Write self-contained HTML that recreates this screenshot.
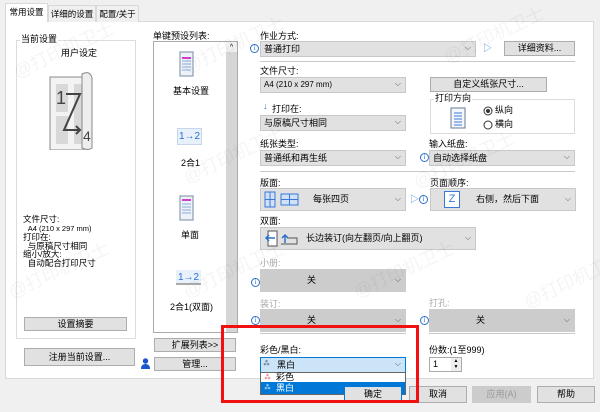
<!DOCTYPE html>
<html><head><meta charset="utf-8">
<style>
*{margin:0;padding:0;box-sizing:border-box}
body{width:600px;height:412px;background:#f0f0f0;font-family:"Liberation Sans","Noto Sans CJK SC",sans-serif;font-size:9px;line-height:11px;color:#000;position:relative;overflow:hidden}
.a{position:absolute;white-space:nowrap}
.tab{position:absolute;top:5px;height:17px;border:1px solid #d9d9d9;border-bottom:none;background:#f0f0f0;padding:3px 0;font-size:8.5px;text-align:center;line-height:11px}
.panel{position:absolute;left:5px;top:21px;width:589px;height:358px;background:#fff;border:1px solid #d9d9d9}
.cb{position:absolute;background:#e1e1e1;border:1px solid #c8c8c8;padding:2px 3px;font-size:9px;line-height:10px}
.cb:after{content:"⌵";position:absolute;right:4px;top:50%;transform:translateY(-60%);font-size:8px;color:#555}
.btn{position:absolute;background:#e1e1e1;border:1px solid #adadad;text-align:center;font-size:9px}
.gray{background:#cccccc;border-color:#ccc}
.info{position:absolute;width:9px;height:9px;border:1px solid #2a6fc9;border-radius:50%;font-size:7px;line-height:7px;text-align:center;color:#2a6fc9;font-family:"Liberation Serif",serif}
.sep{position:absolute;height:1px;background:#c8c8c8}
.wm{position:absolute;color:rgba(0,0,0,0.045);font-size:18px;transform:rotate(-25deg);white-space:nowrap}
</style></head><body>
<div class="panel"></div>
<div class="tab" style="left:5px;top:3px;width:43px;height:19px;background:#fff;z-index:2">常用设置</div>
<div class="tab" style="left:48px;width:48px">详细的设置</div>
<div class="tab" style="left:96px;width:43px">配置/关于</div>

<!-- left group -->
<div class="a" style="left:16px;top:40px;width:120px;height:299px;border:1px solid #dcdcdc"></div>
<div class="a" style="left:20px;top:34px;background:#fff;padding:0 1px;line-height:10px">当前设置</div>
<div class="a" style="left:61px;top:48px">用户设定</div>
<svg class="a" style="left:48px;top:68px" width="50" height="82" viewBox="0 0 50 82">
<path d="M2 9h34v73H2z" fill="#f3f3f3" stroke="#888"/>
<rect x="8" y="16" width="12" height="28" fill="#d8d8d8"/><rect x="8" y="48" width="12" height="28" fill="#d8d8d8"/>
<rect x="26" y="16" width="10" height="60" fill="#d8d8d8"/>
<path d="M34 6q8-4 10 4v70q-4 3-10 0z" fill="#eee" stroke="#888"/>
<text x="8" y="36" font-size="18" font-family="Liberation Sans" fill="#444">1</text>
<path d="M18 26h14L16 62h16" fill="none" stroke="#444" stroke-width="2"/>
<path d="M28 58l4 4-4 4" fill="none" stroke="#444" stroke-width="2"/>
<text x="35" y="73" font-size="14" font-family="Liberation Sans" fill="#444">4</text>
</svg>
<div class="a" style="left:23px;top:215px;line-height:8.6px;font-size:8.5px">文件尺寸:<br>&nbsp;&nbsp;<span style="font-size:7.5px">A4 (210 x 297 mm)</span><br>打印在:<br>&nbsp;&nbsp;与原稿尺寸相同<br>缩小/放大:<br>&nbsp;&nbsp;自动配合打印尺寸</div>
<div class="btn" style="left:24px;top:317px;width:103px;height:14px;line-height:12px">设置摘要</div>
<div class="btn" style="left:24px;top:348px;width:111px;height:18px;line-height:16px">注册当前设置...</div>

<!-- middle list -->
<div class="a" style="left:153px;top:31px">单键预设列表:</div>
<div class="a" style="left:153px;top:41px;width:85px;height:292px;border:1px solid #aaa;background:#fff"></div>
<div class="a" style="left:226px;top:42px;width:11px;height:290px;background:#d6d6d6"></div>
<div class="a" style="left:226px;top:42px;width:11px;height:10px;background:#f0f0f0;font-size:7px;text-align:center;line-height:12px">^</div>
<svg class="a" style="left:179px;top:51px" width="16" height="26"><rect x="1" y="1" width="13" height="24" fill="#eef3fa" stroke="#7a8aa0"/><path d="M3 7h9M3 10h9M3 13h9M3 16h9M3 19h9" stroke="#8aa8d8"/><path d="M3 7h9" stroke="#d040d0" stroke-width="2"/></svg>
<div class="a" style="left:173px;top:86px">基本设置</div>
<div class="a" style="left:177px;top:128px;width:25px;height:17px;background:#e8f0fb;border:1px solid #c7d5ea;color:#2a6fc9;font-size:10px;text-align:center;line-height:15px">1→2</div>
<div class="a" style="left:181px;top:158px">2合1</div>
<svg class="a" style="left:179px;top:195px" width="16" height="26"><rect x="1" y="1" width="13" height="24" fill="#eef3fa" stroke="#7a8aa0"/><path d="M3 9h9M3 12h9M3 15h9M3 18h9" stroke="#8aa8d8"/><path d="M3 5h9" stroke="#d040d0" stroke-width="2"/></svg>
<div class="a" style="left:181px;top:230px">单面</div>
<div class="a" style="left:176px;top:270px;width:25px;height:15px;background:#e8f0fb;border-bottom:2px solid #aaa;color:#2a6fc9;font-size:10px;text-align:center;line-height:15px">1→2</div>
<div class="a" style="left:170px;top:302px">2合1(双面)</div>
<div class="btn" style="left:154px;top:338px;width:82px;height:14px;line-height:12px">扩展列表&gt;&gt;</div>
<div class="btn" style="left:154px;top:357px;width:82px;height:14px;line-height:12px">管理...</div>
<svg class="a" style="left:141px;top:358px" width="9" height="11"><circle cx="4.5" cy="3" r="2.7" fill="#1a56c9"/><path d="M0 11q0-5 4.5-5t4.5 5z" fill="#1a56c9"/></svg>

<!-- right -->
<div class="a" style="left:260px;top:31px">作业方式:</div>
<div class="info" style="left:250px;top:44px">i</div>
<div class="cb" style="left:260px;top:41px;width:216px;height:16px">普通打印</div>
<div class="a" style="left:483px;top:43px;color:#4a90e2;font-size:9px">▷</div>
<div class="btn" style="left:504px;top:41px;width:71px;height:15px;line-height:13px">详细资料...</div>
<div class="sep" style="left:260px;top:61px;width:315px"></div>

<div class="a" style="left:260px;top:66px">文件尺寸:</div>
<div class="cb" style="left:260px;top:77px;width:146px;height:16px;font-size:8px">A4 (210 x 297 mm)</div>
<div class="btn" style="left:430px;top:77px;width:117px;height:15px;line-height:13px">自定义纸张尺寸...</div>
<div class="a" style="left:263px;top:101px;color:#2a6fc9">↓</div>
<div class="a" style="left:272px;top:104px">打印在:</div>
<div class="cb" style="left:260px;top:115px;width:146px;height:16px">与原稿尺寸相同</div>
<div class="a" style="left:430px;top:99px;width:145px;height:35px;border:1px solid #dcdcdc"></div>
<div class="a" style="left:434px;top:93px;background:#fff;padding:0 1px;line-height:10px">打印方向</div>
<svg class="a" style="left:450px;top:107px" width="16" height="22"><rect x="1" y="1" width="14" height="20" fill="#f4f7fc" stroke="#6a7a90"/><path d="M4 6h8M4 9h8M4 12h8M4 15h8M4 18h8" stroke="#3a78d8"/></svg>
<svg class="a" style="left:483px;top:106px" width="10" height="30"><circle cx="5" cy="5" r="4" fill="#fff" stroke="#333"/><circle cx="5" cy="5" r="2" fill="#333"/><circle cx="5" cy="19" r="4" fill="#fff" stroke="#333"/></svg>
<div class="a" style="left:495px;top:105px">纵向</div>
<div class="a" style="left:495px;top:119px">横向</div>

<div class="a" style="left:260px;top:139px">纸张类型:</div>
<div class="cb" style="left:260px;top:150px;width:146px;height:16px">普通纸和再生纸</div>
<div class="a" style="left:429px;top:139px">输入纸盘:</div>
<div class="info" style="left:420px;top:153px">i</div>
<div class="cb" style="left:429px;top:150px;width:146px;height:16px">自动选择纸盘</div>
<div class="sep" style="left:260px;top:171px;width:315px"></div>

<div class="a" style="left:260px;top:178px">版面:</div>
<div class="cb" style="left:260px;top:188px;width:146px;height:23px;padding-left:52px;line-height:17px">每张四页</div>
<svg class="a" style="left:264px;top:191px" width="48" height="17"><rect x="1" y="1" width="10" height="15" fill="#cfe0f7" stroke="#3a78d8"/><path d="M6 1v15M1 8.5h10" stroke="#3a78d8"/><rect x="17" y="3" width="17" height="11" fill="#cfe0f7" stroke="#3a78d8"/><path d="M25.5 3v11M17 8.5h17" stroke="#3a78d8"/></svg>
<div class="a" style="left:410px;top:194px;color:#4a90e2">▷</div>
<div class="info" style="left:419px;top:195px">i</div>
<div class="a" style="left:430px;top:178px">页面顺序:</div>
<div class="cb" style="left:430px;top:188px;width:146px;height:23px;padding-left:45px;line-height:17px">右侧，然后下面</div>
<div class="a" style="left:444px;top:191px;width:16px;height:17px;background:#fff;border:1px solid #3a78d8;color:#3a78d8;font-size:11px;text-align:center;line-height:15px">Z</div>

<div class="a" style="left:260px;top:216px">双面:</div>
<div class="cb" style="left:260px;top:227px;width:216px;height:23px;padding-left:45px;line-height:17px">长边装订(向左翻页/向上翻页)</div>
<svg class="a" style="left:265px;top:230px" width="40" height="17"><rect x="3" y="1" width="9" height="15" fill="#fff" stroke="#555"/><path d="M10 8H2m2-3-3 3 3 3" fill="none" stroke="#2a6fc9" stroke-width="1.5"/><path d="M16 14h16v-6H22" fill="none" stroke="#555"/><path d="M20 13V5m-3 3 3-3 3 3" fill="none" stroke="#2a6fc9" stroke-width="1.5"/></svg>

<div class="a" style="left:260px;top:258px;color:#aaa">小册:</div>
<div class="info" style="left:251px;top:278px">i</div>
<div class="cb gray" style="left:260px;top:269px;width:146px;height:23px;padding-left:46px;line-height:17px">关</div>
<div class="a" style="left:260px;top:299px;color:#aaa">装订:</div>
<div class="info" style="left:251px;top:316px">i</div>
<div class="cb gray" style="left:260px;top:309px;width:146px;height:23px;padding-left:46px;line-height:17px">关</div>
<div class="a" style="left:429px;top:298px;color:#aaa">打孔:</div>
<div class="info" style="left:420px;top:316px">i</div>
<div class="cb gray" style="left:429px;top:309px;width:146px;height:23px;padding-left:46px;line-height:17px">关</div>
<div class="sep" style="left:260px;top:333px;width:146px"></div>
<div class="sep" style="left:429px;top:333px;width:146px"></div>

<div class="a" style="left:260px;top:345px">彩色/黑白:</div>
<div class="cb" style="left:260px;top:357px;width:146px;height:16px;background:#cce4f7;border-color:#0078d7;padding-left:16px">黑白</div>
<div class="a" style="left:263px;top:360px;font-size:7px;line-height:8px;color:#333">⁂</div>
<div class="a" style="left:260px;top:372px;width:146px;height:23px;background:#fff;border:1px solid #666"></div>
<div class="a" style="left:264px;top:374px;font-size:7px;line-height:8px;color:#c33">⁂</div>
<div class="a" style="left:276px;top:372px;line-height:10px">彩色</div>
<div class="a" style="left:261px;top:382px;width:144px;height:12px;background:#0078d7"></div>
<div class="a" style="left:264px;top:384px;font-size:7px;line-height:8px;color:#fff">⁂</div>
<div class="a" style="left:276px;top:383px;color:#fff;line-height:10px">黑白</div>

<div class="a" style="left:429px;top:345px">份数:(1至999)</div>
<div class="a" style="left:429px;top:357px;width:33px;height:15px;border:1px solid #aaa;background:#fff;padding:1px 3px">1</div>
<div class="a" style="left:451px;top:358px;width:10px;height:13px;background:#eee;font-size:5px;line-height:6px;text-align:center">▲<br>▼</div>

<!-- bottom buttons -->
<div class="btn" style="left:344px;top:386px;width:58px;height:17px;line-height:15px;border-color:#0078d7">确定</div>
<div class="btn" style="left:409px;top:386px;width:58px;height:17px;line-height:15px">取消</div>
<div class="btn" style="left:472px;top:386px;width:59px;height:17px;line-height:15px;color:#999;border-color:#ccc;background:#ccc">应用(A)</div>
<div class="btn" style="left:537px;top:386px;width:58px;height:17px;line-height:15px">帮助</div>

<!-- red box -->
<div class="a" style="left:221px;top:325px;width:198px;height:78px;border:3px solid #f01010"></div>

<div class="wm" style="left:10px;top:45px">@打印机卫士</div>
<div class="wm" style="left:180px;top:40px">@打印机卫士</div>
<div class="wm" style="left:440px;top:30px">@打印机卫士</div>
<div class="wm" style="left:5px;top:265px">@打印机卫士</div>
<div class="wm" style="left:180px;top:150px">@打印机卫士</div>
<div class="wm" style="left:410px;top:155px">@打印机卫士</div>
<div class="wm" style="left:180px;top:265px">@打印机卫士</div>
<div class="wm" style="left:350px;top:265px">@打印机卫士</div>
<div class="wm" style="left:520px;top:275px">@打印机卫士</div>
</body></html>
